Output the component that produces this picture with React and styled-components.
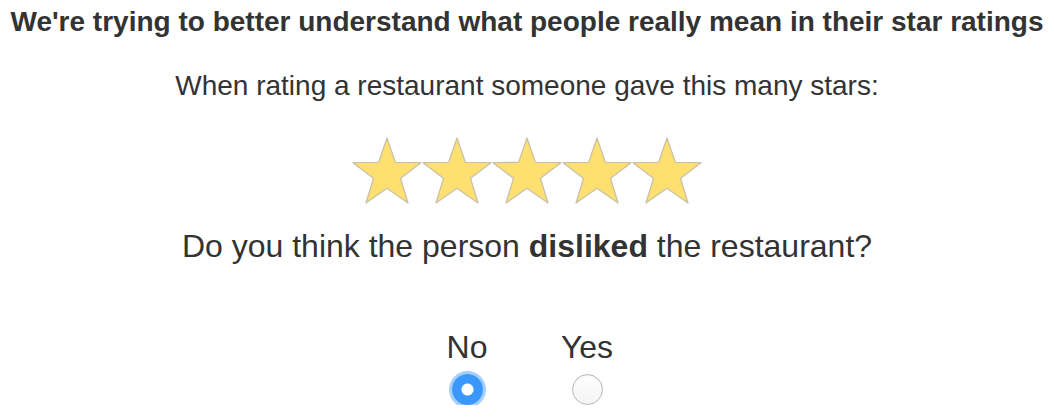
import React from 'react';
import styled, { createGlobalStyle } from 'styled-components';

const Global = createGlobalStyle`
  body {
    margin: 0;
    background: #fff;
    font-family: "Liberation Sans", Arial, sans-serif;
    color: #333;
  }
`;

const Page = styled.div`
  display: flex;
  flex-direction: column;
  align-items: center;
  padding-top: 6px;
`;

const Title = styled.h3`
  margin: 0;
  font-size: 28px;
  font-weight: bold;
  line-height: 32px;
  text-align: center;
  white-space: nowrap;
`;

const Prompt = styled.p`
  margin: 0;
  margin-top: ${({ $top }) => $top}px;
  font-size: ${({ $size }) => $size}px;
  line-height: 1.15;
  text-align: center;
  white-space: nowrap;

  b {
    font-weight: bold;
  }
`;

const Stars = styled.div`
  display: flex;
  margin-top: 35px;
`;

const StarIcon = styled.svg`
  width: 70px;
  height: 68px;
  overflow: visible;
  display: block;
`;

const Choices = styled.div`
  display: flex;
  gap: 70px;
  margin-top: 64px;
`;

const Choice = styled.label`
  display: flex;
  flex-direction: column;
  align-items: center;
  width: 50px;
  font-size: 32px;
  line-height: 37px;
  gap: 8px;
`;

const Radio = styled.input`
  appearance: none;
  margin: 0;
  width: 31px;
  height: 31px;
  border-radius: 50%;
  border: 1px solid #b8b8b8;
  background: linear-gradient(#fff, #f4f4f4);
  box-shadow: inset 0 1px 1px rgba(0, 0, 0, 0.08);

  &:checked {
    border: none;
    background: radial-gradient(circle, #fff 0 5.5px, #3a97fb 6.5px);
    box-shadow: 0 0 0 3px rgba(90, 165, 250, 0.55);
  }
`;

const Star = () => (
  <StarIcon viewBox="0 0 70 68">
    <polygon
      points="35,1 43.4,25.4 69,25.7 48.5,41.3 56,66 35,51.2 14,66 21.5,41.3 1,25.7 26.6,25.4"
      fill="#fde070"
      stroke="#c9c2a8"
      strokeWidth="1.3"
      strokeLinejoin="round"
    />
  </StarIcon>
);

const App = () => {
  return (
    <>
      <Global />
      <Page>
        <Title>We're trying to better understand what people really mean in their star ratings</Title>
        <Prompt $top={32} $size={28}>When rating a restaurant someone gave this many stars:</Prompt>
        <Stars>
          {[0, 1, 2, 3, 4].map((i) => <Star key={i} />)}
        </Stars>
        <Prompt $top={23} $size={32}>
          Do you think the person <b>disliked</b> the restaurant?
        </Prompt>
        <Choices>
          <Choice>
            No
            <Radio type="radio" name="disliked" defaultChecked />
          </Choice>
          <Choice>
            Yes
            <Radio type="radio" name="disliked" />
          </Choice>
        </Choices>
      </Page>
    </>
  );
};

export default App;
